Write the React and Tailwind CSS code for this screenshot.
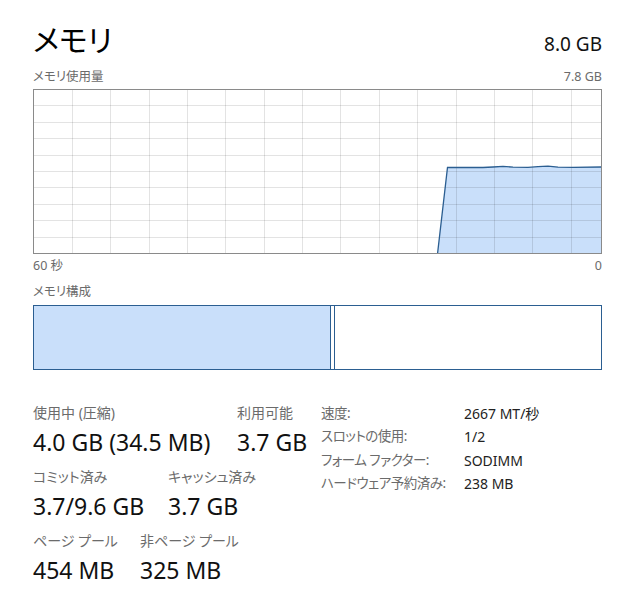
import React from "react";

const font = {
  fontFamily: '"Noto Sans", "Noto Sans CJK JP", sans-serif',
};

const hLines = [1, 2, 3, 4, 5, 6, 7, 8, 9].map((i) => Math.round(i * 16.4) + 0.5);
const vLines = Array.from({ length: 14 }, (_, i) => Math.round(39 + i * 38.35) + 0.5);

function UsageGraph() {
  const top =
    "404.5,165 414.5,78.5 450,78.5 460,78 470,77.3 480,78.2 495,78.4 505,77.6 515,77.2 525,78.1 540,78.3 568.5,78";
  return (
    <svg width="569" height="165" viewBox="0 0 569 165" className="block">
      <rect x="0" y="0" width="569" height="165" fill="#ffffff" />
      <polygon points={`${top} 568.5,165`} fill="#c9dffa" />
      {hLines.map((y) => (
        <line key={"h" + y} x1="1" x2="568" y1={y} y2={y} stroke="rgba(0,0,0,0.11)" strokeWidth="1" />
      ))}
      {vLines.map((x) => (
        <line key={"v" + x} x1={x} x2={x} y1="1" y2="164" stroke="rgba(0,0,0,0.11)" strokeWidth="1" />
      ))}
      <polyline points={top} fill="none" stroke="#2b5e91" strokeWidth="1.3" />
      <rect x="0.5" y="0.5" width="568" height="164" fill="none" stroke="#8a8a8a" strokeWidth="1" />
    </svg>
  );
}

function Stat({ label, value, className = "" }) {
  return (
    <div className={className}>
      <div className="text-[14px] leading-[18px] text-[#6b6b6b] whitespace-nowrap">{label}</div>
      <div className="mt-[6px] text-[23px] leading-[28px] text-[#111] whitespace-nowrap">{value}</div>
    </div>
  );
}

const details = [
  ["速度:", "2667 MT/秒"],
  ["スロットの使用:", "1/2"],
  ["フォーム ファクター:", "SODIMM"],
  ["ハードウェア予約済み:", "238 MB"],
];

export default function App() {
  return (
    <div
      style={font}
      className="w-[631px] h-[609px] bg-white pl-[33px] pt-[20px] [font-feature-settings:'palt'] overflow-hidden"
    >
      <div className="w-[569px]">
        {/* header */}
        <div className="h-[40px] flex justify-between items-baseline">
          <div className="text-[30px] leading-[40px] text-black">メモリ</div>
          <div className="text-[19px] leading-[40px] text-[#111]">8.0 GB</div>
        </div>

        <div className="mt-[8px] flex justify-between text-[12.5px] leading-[17px] text-[#6b6b6b]">
          <span>メモリ使用量</span>
          <span>7.8 GB</span>
        </div>

        <div className="mt-[4px]">
          <UsageGraph />
        </div>

        <div className="mt-[3px] flex justify-between text-[12.5px] leading-[17px] text-[#6b6b6b]">
          <span>60 秒</span>
          <span>0</span>
        </div>

        <div className="mt-[9px] text-[12.5px] leading-[17px] text-[#6b6b6b]">メモリ構成</div>

        {/* composition bar */}
        <div className="mt-[5px] h-[65px] flex border border-[#2b5e91]">
          <div className="w-[296px] bg-[#c9dffa]" />
          <div className="w-[1px] bg-[#2b5e91]" />
          <div className="w-[3px] bg-white" />
          <div className="w-[1px] bg-[#2b5e91]" />
          <div className="flex-1 bg-white" />
        </div>

        {/* stats */}
        <div className="mt-[32px] flex items-start">
          <div className="w-[288px] pt-[2px] flex flex-col gap-[12px]">
            <div className="flex">
              <Stat className="w-[204px]" label="使用中 (圧縮)" value="4.0 GB (34.5 MB)" />
              <Stat label="利用可能" value="3.7 GB" />
            </div>
            <div className="flex">
              <Stat className="w-[135px]" label="コミット済み" value="3.7/9.6 GB" />
              <Stat label="キャッシュ済み" value="3.7 GB" />
            </div>
            <div className="flex">
              <Stat className="w-[107px]" label="ページ プール" value="454 MB" />
              <Stat label="非ページ プール" value="325 MB" />
            </div>
          </div>
          <div className="grid grid-cols-[143px_auto] content-start text-[14px] leading-[23.4px]">
            {details.map(([k, v]) => (
              <React.Fragment key={k}>
                <div className="text-[13.5px] text-[#6b6b6b] whitespace-nowrap tracking-[-0.5px]">{k}</div>
                <div className="text-[#222] whitespace-nowrap">{v}</div>
              </React.Fragment>
            ))}
          </div>
        </div>
      </div>
    </div>
  );
}
